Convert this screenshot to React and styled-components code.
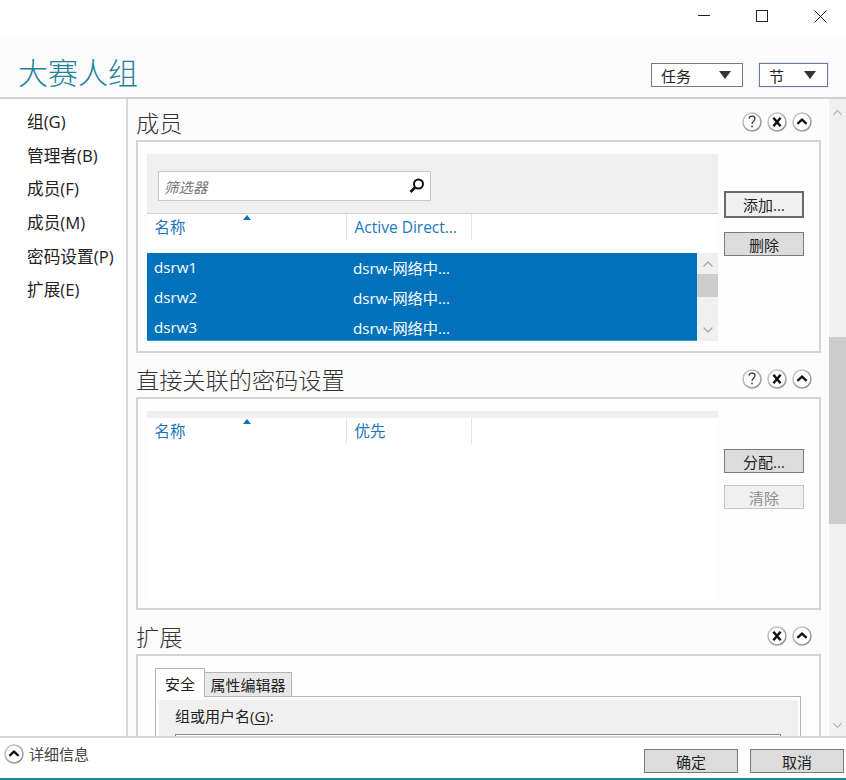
import styled, { createGlobalStyle } from 'styled-components';
import { FiChevronUp, FiChevronDown } from 'react-icons/fi';

const GlobalStyle = createGlobalStyle`
  html, body {
    margin: 0;
    padding: 0;
    background: #fff;
  }
  * {
    box-sizing: border-box;
  }
`;

const Window = styled.div`
  width: 846px;
  height: 780px;
  display: flex;
  flex-direction: column;
  overflow: hidden;
  background: #fcfcfc;
  color: #222;
  font-family: "Open Sans", "Noto Sans CJK SC", sans-serif;
  font-size: 15px;
`;

const TitleBar = styled.div`
  height: 35px;
  flex: none;
  background: #fff;
  display: flex;
  justify-content: flex-end;
  gap: 6px;
`;

const CaptionButton = styled.div`
  width: 52px;
  height: 32px;
  display: flex;
  align-items: center;
  justify-content: center;
`;

const Header = styled.div`
  height: 64px;
  flex: none;
  display: flex;
  align-items: flex-start;
  justify-content: space-between;
  padding: 17px 18px 0;
  border-bottom: 2px solid #d0d0d0;
  background: #fbfbfb;
`;

const PageTitle = styled.h1`
  margin: 0;
  font-size: 30px;
  font-weight: 300;
  line-height: 42px;
  color: #1f8299;
`;

const HeaderActions = styled.div`
  display: flex;
  gap: 16px;
  padding-top: 11px;
`;

const MenuButton = styled.div`
  height: 24px;
  width: ${(p) => p.$width}px;
  display: flex;
  align-items: center;
  justify-content: space-between;
  padding: 0 11px 0 9px;
  background: #fff;
  border: 1px solid ${(p) => (p.$focused ? '#6d7a93' : '#7a7a7a')};
  box-shadow: ${(p) => (p.$focused ? '0 0 0 1px #e8eefb' : 'none')};
  font-size: 15px;
`;

const Caret = styled.span`
  width: 0;
  height: 0;
  border-left: 6.5px solid transparent;
  border-right: 6.5px solid transparent;
  border-top: 8px solid #333;
`;

const Body = styled.div`
  flex: 1;
  min-height: 0;
  display: flex;
`;

const Nav = styled.nav`
  width: 128px;
  flex: none;
  display: flex;
  flex-direction: column;
  gap: 11.7px;
  padding: 12px 0 0 27px;
  border-right: 2px solid #d6d6d6;
  background: #fff;
`;

const NavItem = styled.div`
  height: 22px;
  line-height: 22px;
  font-size: 16.7px;
  white-space: nowrap;
`;

const Content = styled.div`
  flex: 1;
  min-width: 0;
  overflow: hidden;
  padding: 0 8px 0 8px;
`;

const Section = styled.section`
  margin-bottom: 3px;
`;

const SectionHead = styled.div`
  height: 41px;
  display: flex;
  align-items: flex-end;
  justify-content: space-between;
  padding-bottom: 1px;
`;

const SectionTitle = styled.h2`
  margin: 0;
  font-size: 23.2px;
  font-weight: 300;
  line-height: 32px;
  color: #333;
`;

const SectionTools = styled.div`
  display: flex;
  gap: 5px;
  padding: 0 9px 7px 0;
`;

const RoundIcon = styled.svg`
  display: block;
  width: 20px;
  height: 20px;
`;

const Panel = styled.div`
  height: 213px;
  border: 2px solid #d4d4d4;
  background: #fdfdfd;
  padding: 12px 17px 10px 9px;
  display: flex;
  gap: 6px;
`;

const GridArea = styled.div`
  width: 571px;
  flex: none;
  display: flex;
  flex-direction: column;
`;

const FilterBar = styled.div`
  height: 60px;
  flex: none;
  background: #f0f0f0;
  border-bottom: 1px solid #d0d0d0;
  padding: 17px 0 0 11px;
`;

const FilterInput = styled.div`
  width: 273px;
  height: 30px;
  display: flex;
  align-items: center;
  justify-content: space-between;
  padding: 0 3px 0 5px;
  background: #fff;
  border: 1px solid #c8c8c8;
  font-size: 14.5px;
  font-style: italic;
  color: #777;
`;

const ThinStrip = styled.div`
  height: 7px;
  flex: none;
  background: #f0f0f0;
`;

const ColumnRow = styled.div`
  height: ${(p) => p.$height}px;
  flex: none;
  display: flex;
  background: #fff;
`;

const Column = styled.div`
  position: relative;
  width: ${(p) => p.$width}px;
  height: 26px;
  padding: 3px 0 0 7.5px;
  line-height: 20px;
  font-size: 15.5px;
  color: #1b75bb;
  border-right: 1px solid #e4e4e4;
  white-space: nowrap;
`;

const SortMark = styled.span`
  position: absolute;
  left: 96px;
  top: 1px;
  width: 0;
  height: 0;
  border-left: 4px solid transparent;
  border-right: 4px solid transparent;
  border-bottom: 5px solid #0a74b8;
`;

const ListArea = styled.div`
  height: 88px;
  flex: none;
  display: flex;
`;

const Rows = styled.div`
  flex: 1;
  background: #0072bc;
  border-bottom: 1px solid #3c9ad6;
  color: #fff;
`;

const Row = styled.div`
  height: 30px;
  display: flex;
  align-items: center;
  padding: 0 0 2px 7px;
  font-size: 15.2px;
  white-space: nowrap;
`;

const RowCell = styled.div`
  width: ${(p) => p.$width}px;
  flex: none;
`;

const ListScroll = styled.div`
  width: 21px;
  flex: none;
  display: flex;
  flex-direction: column;
  align-items: center;
  justify-content: space-between;
  background: #f0f0f0;
  color: #a8a8a8;
  padding: 3px 0;
  position: relative;
`;

const ListThumb = styled.div`
  position: absolute;
  left: 0;
  top: 21px;
  width: 100%;
  height: 23px;
  background: #cdcdcd;
`;

const BlankList = styled.div`
  flex: 1;
  background: #fff;
`;

const Actions = styled.div`
  display: flex;
  flex-direction: column;
  padding-top: ${(p) => p.$top}px;
`;

const ActionButton = styled.div`
  width: 80px;
  height: ${(p) => (p.$primary ? 27 : 24)}px;
  margin-bottom: ${(p) => (p.$primary ? 14 : 12)}px;
  display: flex;
  align-items: center;
  justify-content: center;
  padding-bottom: ${(p) => (p.$primary ? 1 : 0)}px;
  font-size: 15px;
  background: ${(p) => (p.$disabled ? '#f0f0f0' : p.$primary ? '#f0f0f0' : '#dcdcdc')};
  color: ${(p) => (p.$disabled ? '#8f8f8f' : '#222')};
  border: ${(p) =>
    p.$primary ? '2px solid #6a6a6a' : `1px solid ${p.$disabled ? '#c4c4c4' : '#7a7a7a'}`};
`;

const ExtPanel = styled.div`
  border: 2px solid #d4d4d4;
  border-bottom: 0;
  background: #fdfdfd;
  padding: 12px 18px 0 17px;
`;

const Tabs = styled.div`
  display: flex;
  align-items: flex-end;
  height: 29px;
`;

const Tab = styled.div`
  height: ${(p) => (p.$active ? 29 : 25)}px;
  padding: 0 ${(p) => (p.$active ? 9 : 5.5)}px;
  display: flex;
  align-items: center;
  font-size: 15px;
  background: ${(p) => (p.$active ? '#fff' : '#e8e8e8')};
  border: 1px solid #b4b4b4;
  border-bottom: ${(p) => (p.$active ? '0' : '1px solid #b4b4b4')};
  margin-right: -1px;
  position: relative;
`;

const TabBody = styled.div`
  border: 1px solid #b4b4b4;
  margin-top: -1px;
  padding: 3px 2px 0 3px;
  height: 80px;
`;

const TabInner = styled.div`
  height: 100%;
  background: #f0f0f0;
  padding: 6px 17px 0 16px;
`;

const FieldLabel = styled.div`
  line-height: 20px;
  margin-bottom: 8px;
  u {
    text-underline-offset: 2px;
  }
`;

const FieldBox = styled.div`
  height: 40px;
  background: #fff;
  border: 1px solid #8a8a8a;
`;

const PageScroll = styled.div`
  width: 17px;
  flex: none;
  background: #f0f0f0;
  display: flex;
  flex-direction: column;
  align-items: center;
  justify-content: space-between;
  color: #b4b4b4;
  padding: 6px 0 3px;
  position: relative;
`;

const PageThumb = styled.div`
  position: absolute;
  left: 0;
  top: 238px;
  width: 100%;
  height: 187px;
  background: #cdcdcd;
`;

const Footer = styled.div`
  height: 44px;
  flex: none;
  display: flex;
  align-items: flex-start;
  justify-content: space-between;
  padding: 0 2px 0 4px;
  background: #fff;
  border-top: 2px solid #d6d6d6;
  border-bottom: 2px solid #1f8a9e;
`;

const Details = styled.div`
  display: flex;
  align-items: center;
  gap: 5px;
  margin-top: 5px;
  color: #444;
  font-size: 15px;
`;

const FooterActions = styled.div`
  display: flex;
  gap: 12px;
  margin-top: 11px;
`;

const FooterButton = styled.div`
  width: 94px;
  height: 24px;
  display: flex;
  align-items: center;
  justify-content: center;
  background: #dcdcdc;
  border: 1px solid #7a7a7a;
  font-size: 15px;
`;

const Ring = () => (
  <>
    <defs>
      <linearGradient id="ring" x1="0" y1="0" x2="1" y2="1">
        <stop offset="0" stopColor="#d0d0d0" />
        <stop offset="1" stopColor="#8a8a8a" />
      </linearGradient>
    </defs>
    <circle cx="10" cy="10" r="9" fill="#fff" stroke="url(#ring)" strokeWidth="1.5" />
  </>
);

const Help = () => (
  <RoundIcon viewBox="0 0 20 20">
    <Ring />
    <path d="M7 6.8c0-3.6 6-3.6 6 0 0 2.6-3 2.4-3 5.2" fill="none" stroke="#333" strokeWidth="1.2" />
    <rect x="9.3" y="13.6" width="1.5" height="1.7" fill="#333" />
  </RoundIcon>
);

const Close = () => (
  <RoundIcon viewBox="0 0 20 20">
    <Ring />
    <path d="M6.4 5.8l7.2 8.4M13.6 5.8l-7.2 8.4" fill="none" stroke="#111" strokeWidth="2.5" />
  </RoundIcon>
);

const Collapse = () => (
  <RoundIcon viewBox="0 0 20 20">
    <Ring />
    <path d="M5.4 11.8L10 7.6l4.6 4.2" fill="none" stroke="#111" strokeWidth="2.3" />
  </RoundIcon>
);

const SearchIcon = () => (
  <svg width="20" height="20" viewBox="0 0 20 20">
    <circle cx="11.5" cy="8" r="4.5" fill="none" stroke="#111" strokeWidth="2" />
    <path d="M8 11.5L3.5 16" stroke="#111" strokeWidth="2.6" />
  </svg>
);

const App = () => {
  const navItems = ['组(G)', '管理者(B)', '成员(F)', '成员(M)', '密码设置(P)', '扩展(E)'];
  const members = ['dsrw1', 'dsrw2', 'dsrw3'];

  return (
    <Window>
      <GlobalStyle />
      <TitleBar>
        <CaptionButton>
          <svg width="12" height="12" viewBox="0 0 12 12">
            <path d="M0 5.5h12" stroke="#222" />
          </svg>
        </CaptionButton>
        <CaptionButton>
          <svg width="12" height="12" viewBox="0 0 12 12">
            <rect x="0.5" y="0.5" width="11" height="11" fill="none" stroke="#222" />
          </svg>
        </CaptionButton>
        <CaptionButton>
          <svg width="13" height="13" viewBox="0 0 13 13">
            <path d="M0.5 0.5l12 12M12.5 0.5l-12 12" stroke="#222" />
          </svg>
        </CaptionButton>
      </TitleBar>

      <Header>
        <PageTitle>大赛人组</PageTitle>
        <HeaderActions>
          <MenuButton $width={92}>
            任务
            <Caret />
          </MenuButton>
          <MenuButton $width={69} $focused>
            节
            <Caret />
          </MenuButton>
        </HeaderActions>
      </Header>

      <Body>
        <Nav>
          {navItems.map((item) => (
            <NavItem key={item}>{item}</NavItem>
          ))}
        </Nav>

        <Content>
          <Section>
            <SectionHead>
              <SectionTitle>成员</SectionTitle>
              <SectionTools>
                <Help />
                <Close />
                <Collapse />
              </SectionTools>
            </SectionHead>
            <Panel>
              <GridArea>
                <FilterBar>
                  <FilterInput>
                    筛选器
                    <SearchIcon />
                  </FilterInput>
                </FilterBar>
                <ColumnRow $height={39}>
                  <Column $width={200}>
                    名称
                    <SortMark />
                  </Column>
                  <Column $width={125}>Active Direct...</Column>
                </ColumnRow>
                <ListArea>
                  <Rows>
                    {members.map((name) => (
                      <Row key={name}>
                        <RowCell $width={199}>{name}</RowCell>
                        <RowCell $width={150}>dsrw-网络中...</RowCell>
                      </Row>
                    ))}
                  </Rows>
                  <ListScroll>
                    <FiChevronUp size={16} />
                    <ListThumb />
                    <FiChevronDown size={16} />
                  </ListScroll>
                </ListArea>
              </GridArea>
              <Actions $top={37}>
                <ActionButton $primary>添加...</ActionButton>
                <ActionButton>删除</ActionButton>
              </Actions>
            </Panel>
          </Section>

          <Section>
            <SectionHead>
              <SectionTitle>直接关联的密码设置</SectionTitle>
              <SectionTools>
                <Help />
                <Close />
                <Collapse />
              </SectionTools>
            </SectionHead>
            <Panel>
              <GridArea>
                <ThinStrip />
                <ColumnRow $height={181}>
                  <Column $width={200}>
                    名称
                    <SortMark />
                  </Column>
                  <Column $width={125}>优先</Column>
                </ColumnRow>
                <BlankList />
              </GridArea>
              <Actions $top={38}>
                <ActionButton>分配...</ActionButton>
                <ActionButton $disabled>清除</ActionButton>
              </Actions>
            </Panel>
          </Section>

          <Section>
            <SectionHead>
              <SectionTitle>扩展</SectionTitle>
              <SectionTools>
                <Close />
                <Collapse />
              </SectionTools>
            </SectionHead>
            <ExtPanel>
              <Tabs>
                <Tab $active>安全</Tab>
                <Tab>属性编辑器</Tab>
              </Tabs>
              <TabBody>
                <TabInner>
                  <FieldLabel>
                    组或用户名(<u>G</u>):
                  </FieldLabel>
                  <FieldBox />
                </TabInner>
              </TabBody>
            </ExtPanel>
          </Section>
        </Content>

        <PageScroll>
          <FiChevronUp size={15} />
          <PageThumb />
          <FiChevronDown size={15} />
        </PageScroll>
      </Body>

      <Footer>
        <Details>
          <Collapse />
          详细信息
        </Details>
        <FooterActions>
          <FooterButton>确定</FooterButton>
          <FooterButton>取消</FooterButton>
        </FooterActions>
      </Footer>
    </Window>
  );
};

export default App;
